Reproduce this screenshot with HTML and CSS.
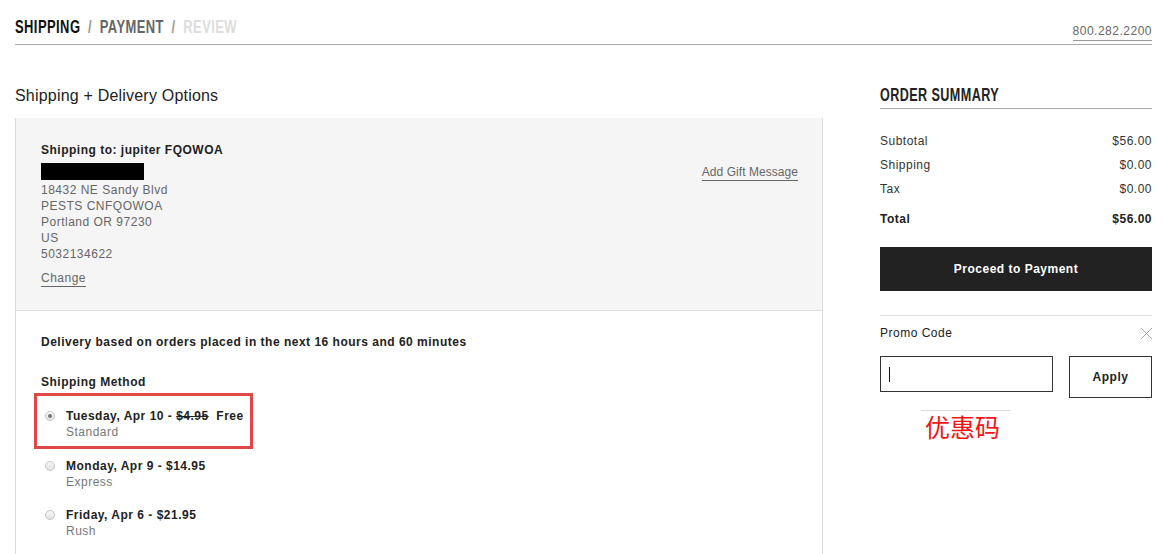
FILE: index.html
```html
<!DOCTYPE html>
<html lang="en">
<head>
    <meta charset="UTF-8">
    <title>Checkout - Shipping</title>
    <link rel="stylesheet" href="styles.css">
</head>
<body>

    <div class="page">

        <!-- Steps + phone -->
        <div class="topbar">
            <div class="steps">
                <span class="step active">SHIPPING</span>
                <span class="sep">/</span>
                <span class="step next">PAYMENT</span>
                <span class="sep">/</span>
                <span class="step off">REVIEW</span>
            </div>
            <a class="phone">800.282.2200</a>
        </div>

        <div class="main">

            <div class="left">
                <h2 class="title">Shipping + Delivery Options</h2>

                <div class="panel">
                    <div class="address-box">
                        <div class="address">
                            <div class="ship-to">Shipping to: jupiter FQOWOA</div>
                            <div class="redacted"></div>
                            <div class="line">18432 NE Sandy Blvd</div>
                            <div class="line">PESTS CNFQOWOA</div>
                            <div class="line">Portland OR 97230</div>
                            <div class="line">US</div>
                            <div class="line">5032134622</div>
                            <a class="link change">Change</a>
                        </div>
                        <a class="link gift">Add Gift Message</a>
                    </div>

                    <div class="delivery">
                        <p class="notice">Delivery based on orders placed in the next 16 hours and 60 minutes</p>
                        <h3 class="method-title">Shipping Method</h3>

                        <div class="options">
                            <div class="option marked">
                                <span class="radio checked"></span>
                                <div>
                                    <div class="opt-main">Tuesday, Apr 10 - <s>$4.95</s>&nbsp; Free</div>
                                    <div class="opt-sub">Standard</div>
                                </div>
                            </div>
                            <div class="option">
                                <span class="radio"></span>
                                <div>
                                    <div class="opt-main">Monday, Apr 9 - $14.95</div>
                                    <div class="opt-sub">Express</div>
                                </div>
                            </div>
                            <div class="option">
                                <span class="radio"></span>
                                <div>
                                    <div class="opt-main">Friday, Apr 6 - $21.95</div>
                                    <div class="opt-sub">Rush</div>
                                </div>
                            </div>
                        </div>
                    </div>
                </div>
            </div>

            <div class="right">
                <h2 class="summary-title"><span class="narrow">ORDER SUMMARY</span></h2>

                <div class="totals">
                    <div class="row"><span>Subtotal</span><span>$56.00</span></div>
                    <div class="row"><span>Shipping</span><span>$0.00</span></div>
                    <div class="row"><span>Tax</span><span>$0.00</span></div>
                    <div class="row total"><span>Total</span><span>$56.00</span></div>
                </div>

                <button class="btn-proceed">Proceed to Payment</button>

                <div class="promo">
                    <div class="promo-head">
                        <span>Promo Code</span>
                        <svg class="close" width="13" height="13" viewBox="0 0 13 13">
                            <path d="M1 1 L12 12 M12 1 L1 12" stroke="#aaa" stroke-width="1" fill="none"/>
                        </svg>
                    </div>
                    <div class="promo-form">
                        <div class="promo-input"><span class="caret"></span></div>
                        <button class="btn-apply">Apply</button>
                    </div>
                    <!-- annotation -->
                    <div class="note">
                        <div class="note-line"></div>
                        <div class="note-text">优惠码</div>
                    </div>
                </div>
            </div>

        </div>
    </div>

</body>
</html>
```

FILE: styles.css
```css
* {
    margin: 0;
    padding: 0;
    box-sizing: border-box;
}

body {
    font-family: "Liberation Sans", Arial, sans-serif;
    font-size: 12px;
    color: #222;
    background: #fff;
    overflow: hidden;
}

a {
    color: inherit;
    text-decoration: none;
}

.page {
    padding: 0 15px;
    height: 554px;
    display: flex;
    flex-direction: column;
}

/* Top steps bar */
.topbar {
    display: flex;
    justify-content: space-between;
    align-items: flex-end;
    border-bottom: 1px solid #aaa;
    height: 45px;
    padding-bottom: 3px;
}

/* condensed headline look: no narrow font installed, so squeeze */
.steps, .narrow {
    display: inline-block;
    font-family: "Liberation Sans", Arial, sans-serif;
    font-weight: bold;
    font-size: 18px;
    letter-spacing: 0.6px;
    line-height: 20px;
    transform: scaleX(0.72);
    transform-origin: left center;
    white-space: nowrap;
}

.narrow {
    transform: scaleX(0.7);
}

.steps {
    padding-bottom: 4px;
}

.step.active { color: #111; }
.step.next { color: #666; }
.step.off { color: #ddd; }

.sep {
    color: #999;
    margin: 0 5px;
}

.phone {
    font-size: 12px;
    color: #666;
    letter-spacing: 0.5px;
    line-height: 14px;
    padding-bottom: 2px;
    border-bottom: 1px solid #999;
}

/* Columns */
.main {
    flex: 1;
    display: flex;
    gap: 57px;
    min-height: 0;
}

.left {
    width: 808px;
    display: flex;
    flex-direction: column;
}

.title {
    font-size: 16px;
    font-weight: normal;
    line-height: 20px;
    letter-spacing: 0.2px;
    color: #222;
    margin-top: 41px;
    margin-bottom: 12px;
}

.panel {
    flex: 1;
    border-left: 1px solid #ddd;
    border-right: 1px solid #ddd;
}

.address-box {
    background: #f5f5f5;
    border-bottom: 1px solid #ddd;
    padding: 24px 24px 23px 25px;
    display: flex;
    justify-content: space-between;
    align-items: flex-start;
    letter-spacing: 0.5px;
    line-height: 16px;
}

.ship-to {
    font-weight: bold;
    color: #222;
}

.redacted {
    width: 103px;
    height: 17px;
    background: #000;
    margin-top: 5px;
    margin-bottom: 2px;
}

.address .line {
    color: #666;
}

.link {
    display: inline-block;
    color: #666;
    line-height: 15px;
    border-bottom: 1px solid #666;
}

.change {
    margin-top: 9px;
}

.gift {
    margin-top: 23px;
    letter-spacing: 0.05px;
}

/* Delivery */
.delivery {
    padding: 23px 25px 0 25px;
    letter-spacing: 0.5px;
    line-height: 16px;
}

.notice {
    font-weight: bold;
    color: #222;
}

.method-title {
    font-size: 12px;
    font-weight: bold;
    margin-top: 24px;
    color: #222;
}

.options {
    display: flex;
    flex-direction: column;
    gap: 17px;
    margin-top: 3px;
}

.option {
    display: flex;
    align-items: flex-start;
    gap: 11px;
    padding-left: 4px;
}

.option.marked {
    border: 3px solid #e04848;
    margin-left: -7px;
    width: 219px;
    padding: 12px 0 6px 8px;
    margin-bottom: -8px;
}

.radio {
    width: 10px;
    height: 10px;
    border-radius: 50%;
    border: 1px solid #c4c4c4;
    background: linear-gradient(#f8f8f8, #e2e2e2);
    margin-top: 3px;
    position: relative;
    flex-shrink: 0;
}

.radio.checked::after {
    content: "";
    position: absolute;
    top: 2px;
    left: 2px;
    width: 4px;
    height: 4px;
    border-radius: 50%;
    background: #777;
}

.opt-main {
    font-weight: bold;
    color: #222;
}

.opt-main s {
    text-decoration-thickness: 1px;
}

.opt-sub {
    color: #777;
}

/* Order summary */
.right {
    width: 272px;
}

.summary-title {
    font-size: 18px;
    line-height: 20px;
    color: #222;
    margin-top: 40px;
    padding-bottom: 3px;
    border-bottom: 1px solid #aaa;
}

.totals {
    margin-top: 24px;
    display: flex;
    flex-direction: column;
    gap: 8px;
    letter-spacing: 0.5px;
    line-height: 16px;
    color: #333;
}

.row {
    display: flex;
    justify-content: space-between;
}

.row.total {
    font-weight: bold;
    color: #222;
    margin-top: 6px;
}

.btn-proceed {
    display: block;
    width: 100%;
    height: 44px;
    margin-top: 20px;
    background: #222;
    color: #fff;
    border: none;
    font-family: "Liberation Sans", Arial, sans-serif;
    font-size: 12px;
    font-weight: bold;
    letter-spacing: 0.5px;
}

.promo {
    margin-top: 24px;
    border-top: 1px solid #ddd;
    padding-top: 9px;
}

.promo-head {
    display: flex;
    justify-content: space-between;
    align-items: center;
    line-height: 16px;
    letter-spacing: 0.5px;
    color: #222;
}

.close {
    margin-right: -1px;
}

.promo-form {
    margin-top: 15px;
    display: flex;
    justify-content: space-between;
    align-items: flex-start;
}

.promo-input {
    width: 173px;
    height: 36px;
    border: 1px solid #333;
    display: flex;
    align-items: center;
    padding-left: 8px;
}

.caret {
    width: 1px;
    height: 15px;
    background: #111;
}

.btn-apply {
    width: 83px;
    height: 42px;
    background: #fff;
    border: 1px solid #333;
    font-family: "Liberation Sans", Arial, sans-serif;
    font-size: 12px;
    font-weight: bold;
    letter-spacing: 0.5px;
    color: #222;
}

.note {
    margin-top: 12px;
    margin-left: 41px;
    width: 90px;
}

.note-line {
    height: 1px;
    background: #ddd;
}

.note-text {
    font-family: "Noto Sans CJK SC", sans-serif;
    font-size: 25px;
    line-height: 30px;
    color: #f41414;
    margin-left: 4px;
}
```
